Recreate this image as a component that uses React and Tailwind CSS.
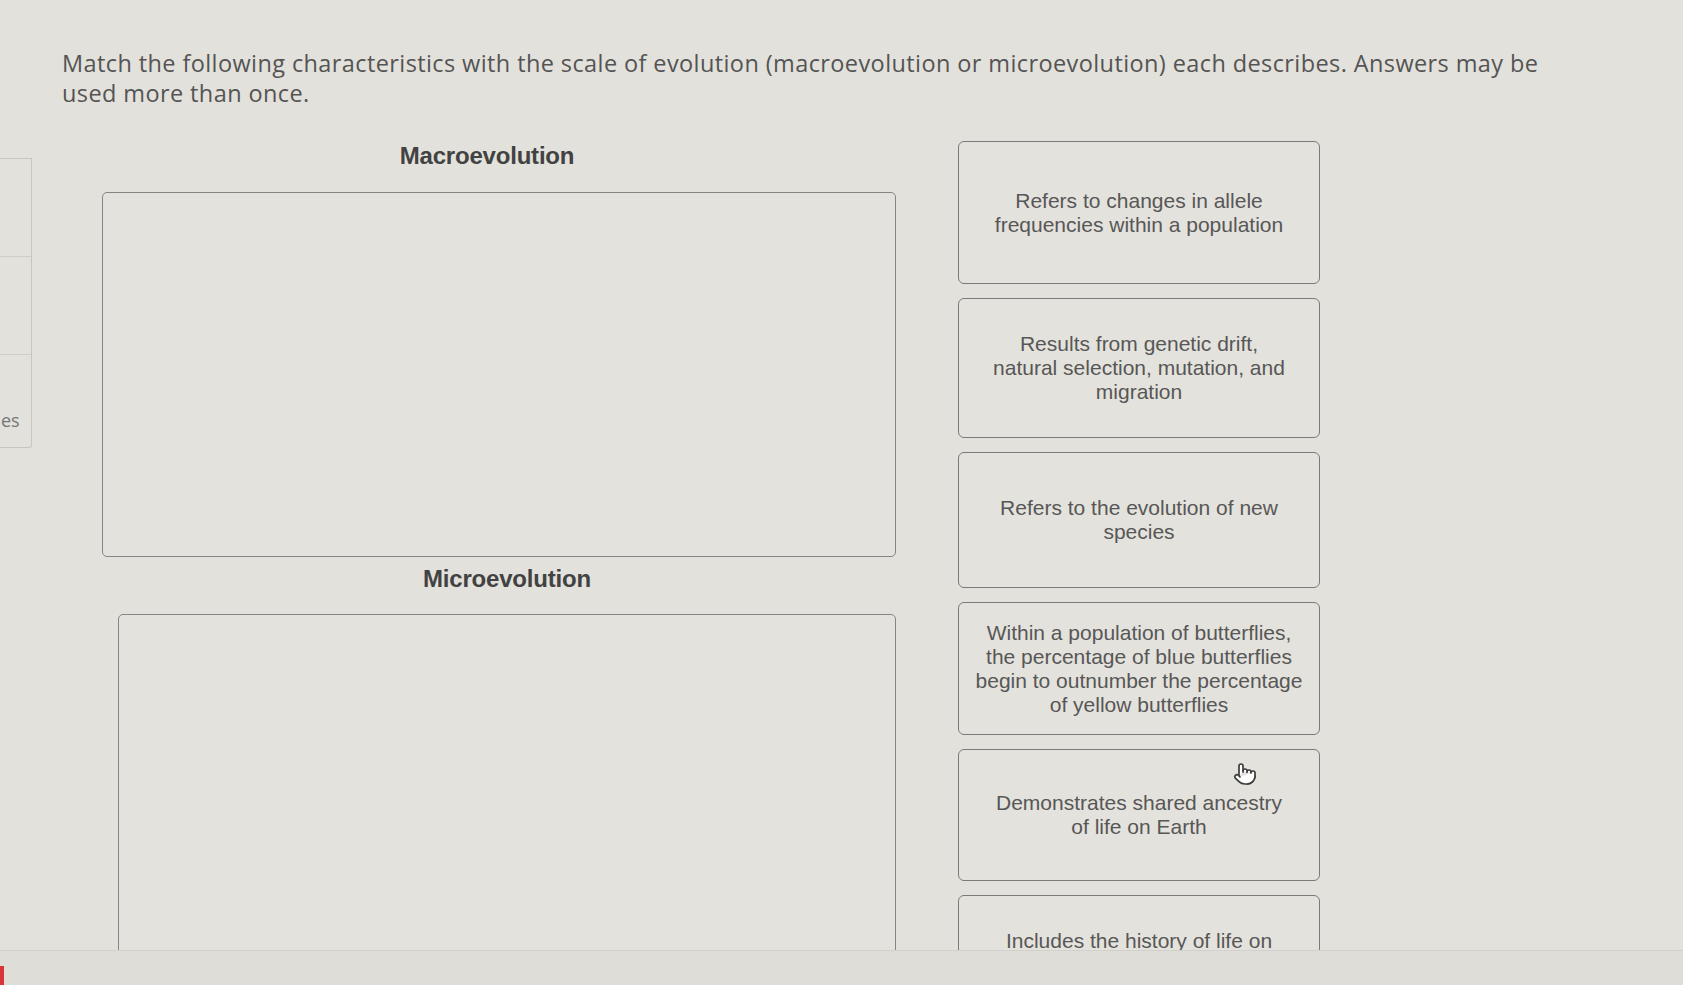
import { Pointer } from 'lucide-react';

// answer choices, one entry per draggable card
const choices = [
  { h: 'h-[143px]', lines: ['Refers to changes in allele', 'frequencies within a population'] },
  { h: 'h-[140px]', lines: ['Results from genetic drift,', 'natural selection, mutation, and', 'migration'] },
  { h: 'h-[136px]', lines: ['Refers to the evolution of new', 'species'] },
  {
    h: 'h-[133px]',
    lines: [
      'Within a population of butterflies,',
      'the percentage of blue butterflies',
      'begin to outnumber the percentage',
      'of yellow butterflies',
    ],
  },
  { h: 'h-[132px]', lines: ['Demonstrates shared ancestry', 'of life on Earth'], hover: true },
  { h: 'h-[116px]', lines: ['Includes the history of life on', 'Earth'] },
];

const ChoiceCard = ({ choice }) => (
  <div
    className={`relative flex w-[362px] shrink-0 cursor-grab items-center justify-center rounded-[6px] border-[1.5px] border-[#7a7a7a] bg-[#e4e2dc] px-3 text-center text-[21px] leading-[24px] text-[#575757] ${choice.h}`}
  >
    <p>
      {choice.lines.map((line) => (
        <span key={line} className="block">
          {line}
        </span>
      ))}
    </p>
    {choice.hover && (
      <Pointer
        size={24}
        strokeWidth={1.7}
        className="absolute left-[274px] top-[12px] fill-white text-[#3c3c3c]"
      />
    )}
  </div>
);

const DropZone = ({ label, offset, labelPad, height }) => (
  <div className={offset}>
    <h3 className={`text-center text-[24px] font-bold leading-[30px] tracking-[-0.2px] text-[#424242] ${labelPad}`}>
      {label}
    </h3>
    <div className={`rounded-[5px] border-[1.5px] border-[#858585] bg-[#e4e2dc] ${height}`} />
  </div>
);

export default function App() {
  return (
    <div className="flex h-[985px] w-full flex-col overflow-hidden bg-[#e3e1db] font-['Liberation_Sans',Arial,sans-serif]">
      <div className="flex min-h-0 flex-1 overflow-hidden">
        {/* collapsed question list on the left */}
        <aside className="mt-[158px] h-[290px] w-[32px] shrink-0 rounded-br-[3px] border-y border-r border-[#c8c6c0] text-[#777]">
          <div className="h-[98px] border-b border-[#cfcdc7]" />
          <div className="h-[98px] border-b border-[#cfcdc7]" />
          <div className="flex h-[92px] items-end pb-[18px] pl-[1px]">
            <span className="font-['Open_Sans',sans-serif] text-[18px] leading-none">es</span>
          </div>
        </aside>

        <main className="min-w-0 flex-1 pl-[30px] pt-[48px]">
          <p className="font-['Open_Sans',sans-serif] text-[23.5px] leading-[30px] tracking-[0.4px] text-[#545454]">
            <span className="block whitespace-nowrap">
              Match the following characteristics with the scale of evolution (macroevolution or microevolution) each
              describes. Answers may be
            </span>
            <span className="block">used more than once.</span>
          </p>

          <div className="mt-[33px] flex">
            <div className="ml-[40px] w-[794px] shrink-0">
              <DropZone label="Macroevolution" offset="" labelPad="pr-[24px]" height="mt-[21px] h-[365px]" />
              <DropZone label="Microevolution" offset="mt-[7px] ml-[16px]" labelPad="" height="mt-[20px] h-[400px]" />
            </div>

            <div className="ml-[62px] flex flex-col gap-[14px]">
              {choices.map((choice) => (
                <ChoiceCard key={choice.lines[0]} choice={choice} />
              ))}
            </div>
          </div>
        </main>
      </div>

      {/* bottom edge of the window */}
      <div className="relative h-[35px] shrink-0 border-t border-[#d2d0ca] bg-[#dfddd7]">
        <span className="absolute bottom-0 left-0 h-[19px] w-[4px] bg-[#d8353a]" />
      </div>
    </div>
  );
}
